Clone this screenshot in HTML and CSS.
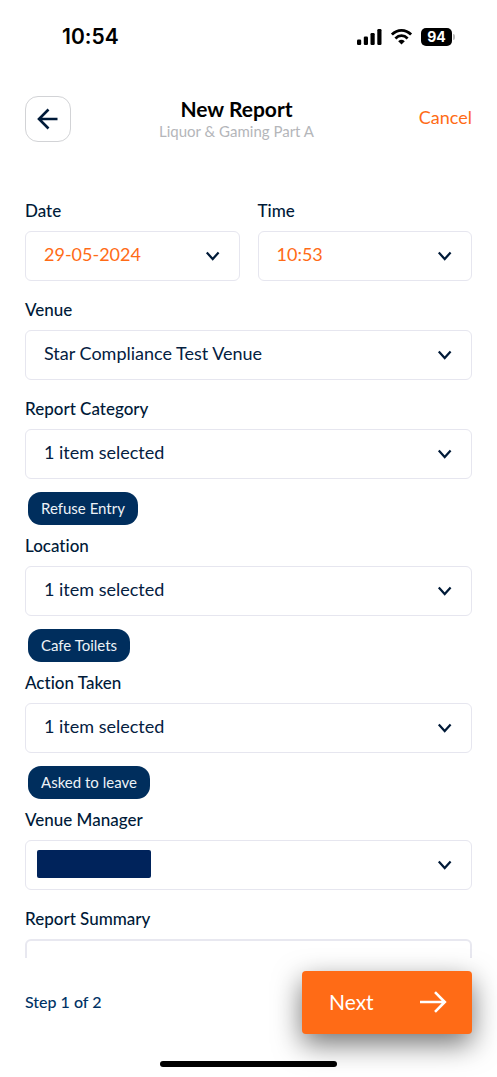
FILE: index.html
```html
<!DOCTYPE html>
<html lang="en">
<head>
<meta charset="utf-8">
<meta name="viewport" content="width=device-width, initial-scale=1">
<title>New Report</title>
<link rel="stylesheet" href="styles.css">
</head>
<body>
<svg class="defs" aria-hidden="true">
  <symbol id="chevron" viewBox="0 0 16 12"><path d="M1.8 2.5L7.7 9L13.6 2.5" fill="none" stroke="currentColor" stroke-width="2.2"/></symbol>
</svg>
<div class="screen">
  <div class="status">
    <span class="clock">10:54</span>
    <div class="indicators">
      <svg width="26" height="18" viewBox="0 0 26 18" aria-hidden="true">
        <rect x="0" y="11.5" width="4.2" height="5.5" rx="1.2"/><rect x="6.8" y="8.5" width="4.2" height="8.5" rx="1.2"/><rect x="13.5" y="5" width="4.2" height="12" rx="1.2"/><rect x="20.3" y="1" width="4.2" height="16" rx="1.2"/>
      </svg>
      <svg width="22" height="18" viewBox="0 0 22 18" aria-hidden="true">
        <path d="M0.9 6.6C6.4 1 14.6 1 20.1 6.6M4.4 10.4C8 6.8 13 6.8 16.6 10.4" fill="none" stroke="#000" stroke-width="2.8"/>
        <path d="M7.2 13.2Q10.5 10.4 13.8 13.2L10.5 16.6Z"/>
      </svg>
      <div class="battery"><span class="level">94</span><span class="cap"></span></div>
    </div>
  </div>
  <header class="header">
    <button class="back" type="button" aria-label="Back">
      <svg width="22" height="22" viewBox="0 0 22 22" aria-hidden="true"><path d="M20.5 11H2.2M11.5 1.5L2 11L11.5 20.5" fill="none" stroke="currentColor" stroke-width="2.6"/></svg>
    </button>
    <div class="heading">
      <h1 class="title">New Report</h1>
      <p class="subtitle">Liquor &amp; Gaming Part A</p>
    </div>
    <a class="cancel" href="#">Cancel</a>
  </header>
  <form class="form" id="report">
    <div class="pair">
      <div class="field">
        <label class="label" for="date">Date</label>
        <div class="control"><select class="select accent" id="date"><option>29-05-2024</option></select><svg class="chevron" aria-hidden="true"><use href="#chevron"/></svg></div>
      </div>
      <div class="field">
        <label class="label" for="time">Time</label>
        <div class="control"><select class="select accent" id="time"><option>10:53</option></select><svg class="chevron" aria-hidden="true"><use href="#chevron"/></svg></div>
      </div>
    </div>
    <div class="field">
      <label class="label" for="venue">Venue</label>
      <div class="control"><select class="select" id="venue"><option>Star Compliance Test Venue</option></select><svg class="chevron" aria-hidden="true"><use href="#chevron"/></svg></div>
    </div>
    <div class="field">
      <label class="label" for="category">Report Category</label>
      <div class="control"><select class="select" id="category"><option>1 item selected</option></select><svg class="chevron" aria-hidden="true"><use href="#chevron"/></svg></div>
      <div class="chips"><span class="chip">Refuse Entry</span></div>
    </div>
    <div class="field">
      <label class="label" for="location">Location</label>
      <div class="control"><select class="select" id="location"><option>1 item selected</option></select><svg class="chevron" aria-hidden="true"><use href="#chevron"/></svg></div>
      <div class="chips"><span class="chip">Cafe Toilets</span></div>
    </div>
    <div class="field">
      <label class="label" for="action">Action Taken</label>
      <div class="control"><select class="select" id="action"><option>1 item selected</option></select><svg class="chevron" aria-hidden="true"><use href="#chevron"/></svg></div>
      <div class="chips"><span class="chip">Asked to leave</span></div>
    </div>
    <div class="field">
      <label class="label" for="manager">Venue Manager</label>
      <div class="control"><select class="select" id="manager"><option></option></select><span class="redacted"></span><svg class="chevron" aria-hidden="true"><use href="#chevron"/></svg></div>
    </div>
    <div class="field">
      <label class="label" for="summary">Report Summary</label>
      <textarea class="textarea" id="summary"></textarea>
    </div>
  </form>
  <footer class="footer">
    <span class="step">Step 1 of 2</span>
    <button class="next" type="submit" form="report">Next
      <svg width="28" height="22" viewBox="0 0 28 22" aria-hidden="true"><path d="M1 11H25.5M16 1.2L25.8 11L16 20.8" fill="none" stroke="currentColor" stroke-width="2.6"/></svg>
    </button>
  </footer>
  <div class="home"></div>
</div>
</body>
</html>
```
FILE: styles.css
```css
* { box-sizing: border-box; }
body { margin: 0; background: #fff; color: #04203f; font-family: Lato, "Open Sans", sans-serif; font-variant-ligatures: none; }
button, select, textarea { font: inherit; color: inherit; }
.defs { position: absolute; width: 0; height: 0; }
.screen { height: 100vh; display: flex; flex-direction: column; }
.status { display: flex; flex: none; justify-content: space-between; align-items: center; height: 74px; padding: 0 42px 0 62px; color: #000; font-family: Inter, sans-serif; }
.clock { font-size: 21px; font-weight: 600; line-height: 28px; }
.indicators { display: flex; align-items: center; gap: 8px; }
.battery { display: flex; align-items: center; gap: 1px; }
.level { width: 31px; border-radius: 5px; background: #000; color: #fff; font-size: 14px; font-weight: 700; line-height: 18px; text-align: center; }
.cap { width: 2px; height: 6px; border-radius: 0 2px 2px 0; background: #bbb; }
.header { display: grid; flex: none; grid-template-columns: 1fr auto 1fr; align-items: center; padding: 22px 25px 0; }
.back { display: grid; place-items: center; width: 46px; height: 46px; padding: 0; border: 1px solid #d2d3d6; border-radius: 13px; background: #fff; color: #001a38; }
.heading { padding-right: 24px; text-align: center; }
.title { margin: 0; color: #000; font-size: 21px; font-weight: 700; line-height: 24px; }
.subtitle { margin: 0; color: #b4b6ba; font-size: 15px; line-height: 20px; }
.cancel { justify-self: end; padding-bottom: 4px; color: #ff6b16; font-size: 18px; line-height: 24px; text-decoration: none; }
.form { display: flex; flex: 1; flex-direction: column; min-height: 0; margin-top: 40px; padding: 17px 25px 0; overflow: hidden; }
.pair { display: grid; flex: none; grid-template-columns: 1fr 1fr; gap: 18px; }
.field { display: flex; flex: none; flex-direction: column; padding-bottom: 17px; }
.field:has(.chips) { padding-bottom: 9px; }
.label { margin-bottom: 8px; color: #001a38; font-size: 17px; font-weight: 500; line-height: 24px; }
.control { position: relative; }
.select { display: block; appearance: none; width: 100%; height: 50px; padding: 0 50px 4px 18px; border: 1px solid #e6e6ef; border-radius: 6px; background: #fff; font-size: 18px; }
.accent { color: #ff6b16; }
.chevron { position: absolute; top: 19px; right: 19px; width: 16px; height: 12px; color: #001a38; pointer-events: none; }
.redacted { position: absolute; top: 10px; left: 12px; width: 114px; height: 28px; border-radius: 2px; background: #00235b; }
.chips { display: flex; padding: 13px 3px 0; }
.chip { padding: 0 13px; border-radius: 13px; background: #002e5d; color: #edf2f7; font-size: 15px; line-height: 33px; }
.textarea { width: 100%; height: 150px; border: 2px solid #e8e8f0; border-radius: 6px; resize: none; background: #fff; }
.footer { display: flex; flex: none; align-items: center; justify-content: space-between; padding: 13px 25px 0; }
.step { padding-bottom: 2px; color: #003265; font-size: 16px; font-weight: 500; line-height: 24px; }
.next { display: flex; align-items: center; justify-content: space-between; width: 170px; height: 63px; padding: 0 25px 2px 27px; border: 0; border-radius: 4px; background: #ff6b16; color: #fff; font-size: 21px; box-shadow: 0 10px 28px rgba(0, 0, 0, .55); }
.home { position: relative; flex: none; align-self: center; width: 177px; height: 6px; margin: 27px 0 10px; border-radius: 3px; background: #000; }
```
